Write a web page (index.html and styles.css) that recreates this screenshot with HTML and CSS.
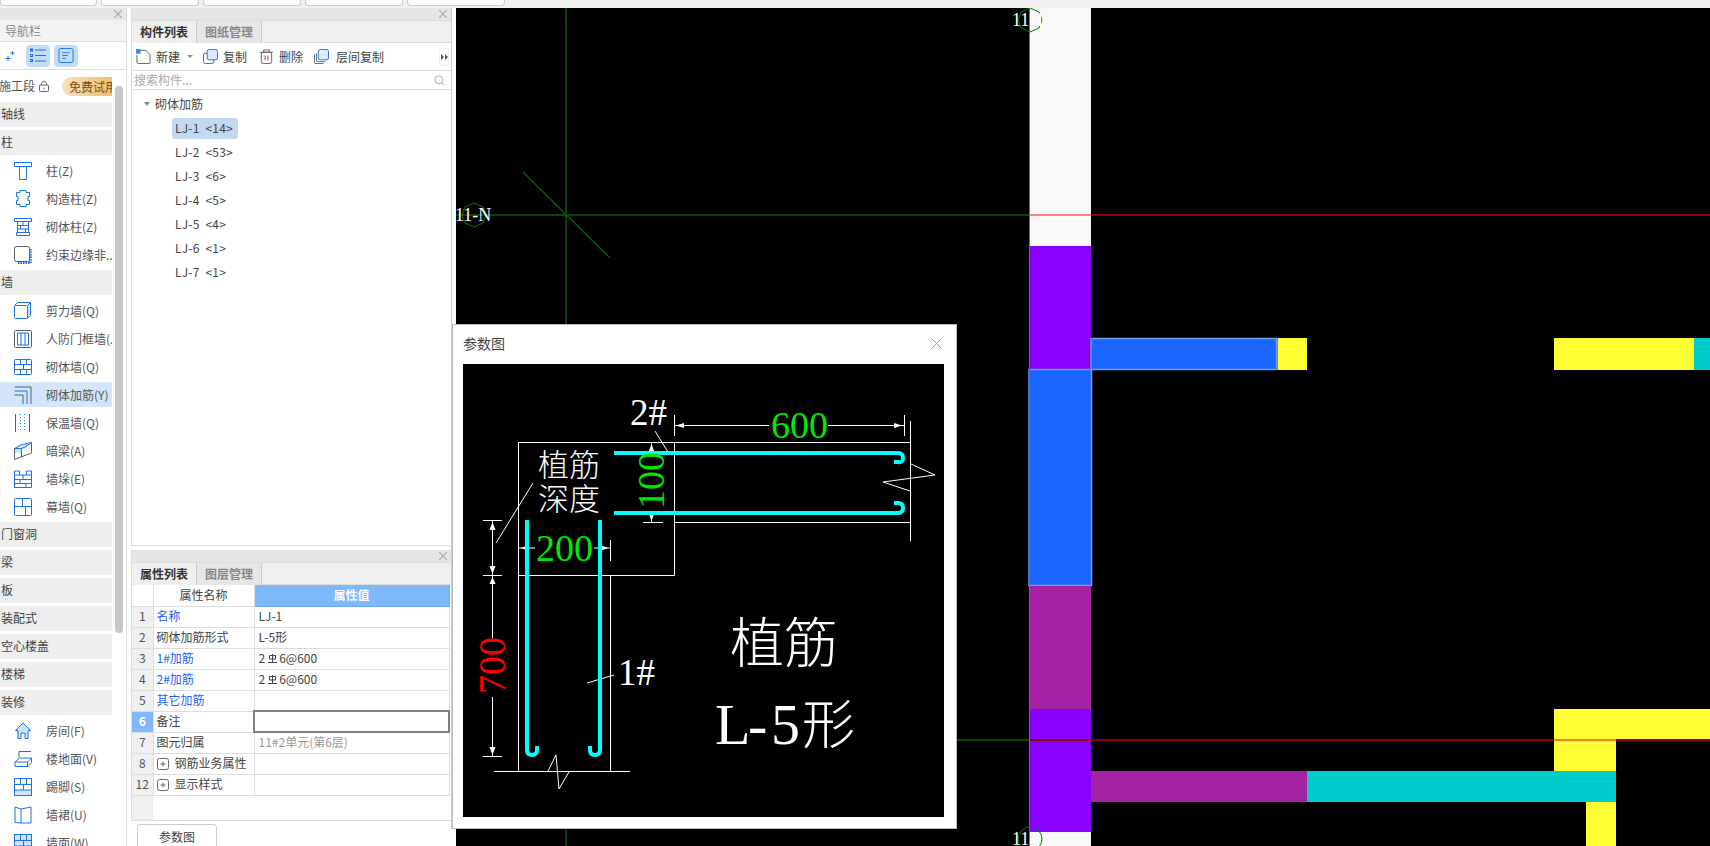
FILE: index.html
```html
<!DOCTYPE html>
<html lang="zh">
<head>
<meta charset="utf-8">
<title>参数图</title>
<link rel="stylesheet" href="styles.css">
</head>
<body>
<div class="app">
  <div class="topstrip">
    <div class="toptab first"></div><div class="toptab"></div><div class="toptab"></div><div class="toptab"></div><div class="toptab"></div>
  </div>
  <div class="main">
    <aside class="nav">
      <div class="panelbar"><svg class="x" viewBox="0 0 8 8"><path d="M0 0L8 8M8 0L0 8"/></svg></div>
      <div class="navtitle">导航栏</div>
      <div class="navtools">
        <svg class="spark" viewBox="0 0 10 12"><path d="M3 6V11M.5 8.500H5.500M7.500 1V5M5.500 3H9.500"/></svg>
        <span class="toggle"><svg viewBox="0 0 16 14"><path class="bl" d="M5 1.500H16M5 7H16M5 12.500H16"/><rect class="bl" x=".5" y=".5" width="2" height="2"/><rect class="bl" x=".5" y="6" width="2" height="2"/><rect class="bl" x=".5" y="11" width="2" height="2"/></svg></span>
        <span class="toggle"><svg viewBox="0 0 16 16"><rect class="bl" x=".5" y=".5" width="15" height="15" rx="2"/><path class="bl" d="M4 5H12M4 8H10M4 11H8"/></svg></span>
      </div>
      <div class="navlist">
        <div class="stage"><span class="stagename">施工段</span>
          <svg class="lock" viewBox="0 0 10 11"><rect class="gr" x=".5" y="4" width="9" height="6.500" rx="1"/><path class="gr" d="M2.500 4V2.500a2.500 2 0 0 1 5 0V4M5 6.500V8.500"/></svg>
          <span class="pill">免费试用</span></div>
        <div class="group">轴线</div>
        <div class="group">柱</div>
        <div class="item"><svg class="ic" viewBox="0 0 18 18"><path class="bl" d="M.5.5H17.500V4.500H.5ZM5.500 4.500V17.500H12.500V4.500"/></svg>柱(Z)</div>
        <div class="item"><svg class="ic" viewBox="0 0 18 18"><path class="bl" d="M6 .5H12V2.500H15.500V6.500H14V10.500H15.500V14.500H12V16.500H6V14.500H2.500V10.500H4V6.500H2.500V2.500H6Z"/></svg>构造柱(Z)</div>
        <div class="item"><svg class="ic" viewBox="0 0 18 18"><path class="bl" d="M.5.5H17.500V3.500H.5ZM3.500 3.500V14.500M14.500 3.500V14.500M2.500 14.500H15.500V17.500H2.500ZM3.500 7.500H14.500M3.500 11H14.500M9 3.500V7.500M6.500 7.500V11M11.500 11V14.500"/></svg>砌体柱(Z)</div>
        <div class="item"><svg class="ic" viewBox="0 0 18 18"><rect class="dk" x=".5" y=".5" width="15" height="15" rx="2"/><path class="hatch" d="M16.500 3V17H3"/></svg>约束边缘非...</div>
        <div class="group">墙</div>
        <div class="item"><svg class="ic" viewBox="0 0 18 18"><path class="fl" d="M13.500 3.500L16.500.5V13.500L13.500 16.500Z"/><rect class="bl" x=".5" y="3.500" width="13" height="13" rx="1"/><path class="bl" d="M.5 3.500L3.500.5H16.500V13.500L13.500 16.500M13.500 3.500L16.500.5"/></svg>剪力墙(Q)</div>
        <div class="item"><svg class="ic" viewBox="0 0 18 18"><rect class="dk" x=".5" y=".5" width="17" height="17" rx="1"/><path class="bl" d="M3.500 3V15M7 3V15M11 3V15M14.500 3V15M3.500 3H14.500M3.500 15H14.500"/></svg>人防门框墙(...</div>
        <div class="item"><svg class="ic" viewBox="0 0 18 18"><rect class="bl" x=".5" y="1.500" width="17" height="15" rx="1"/><path class="bl" d="M.5 6.500H17.500M.5 11.500H17.500M6.500 1.500V6.500M12.500 1.500V6.500M9.500 6.500V11.500M6.500 11.500V16.500M12.500 11.500V16.500"/></svg>砌体墙(Q)</div>
        <div class="item on"><svg class="ic" viewBox="0 0 18 18"><path class="dk" d="M.5 1H17V18M.5 9H9V18"/><path class="bl" d="M.5 5H13V18"/></svg>砌体加筋(Y)</div>
        <div class="item"><svg class="ic" viewBox="0 0 18 18"><path class="dk" d="M1.500 0V18M15.500 0V18"/><path class="dots" d="M6.500 0V18M10.500 0V18"/></svg>保温墙(Q)</div>
        <div class="item"><svg class="ic" viewBox="0 0 18 18"><path class="fl" d="M.5 6.500L6.500 3L17.500.5L11 6.500H.5V11H7V6.500Z"/><path class="bl" d="M.5 6.500L6.500 3L17.500.5L11 5L7.500 6.500H.5"/><path class="dk" d="M.5 6.500V17.500L17.500 11V.5M7.500 6.500V15"/></svg>暗梁(A)</div>
        <div class="item"><svg class="ic" viewBox="0 0 18 18"><path class="bl" d="M.5 1V17.500H17.500V1H12.500V5H5.500V1ZM.5 5H5.500M.5 9.500H17.500M12.500 5H17.500M9 5V9.500M6 9.500V13.500M.5 13.500H17.500M12 13.500V17.500"/></svg>墙垛(E)</div>
        <div class="item"><svg class="ic" viewBox="0 0 18 18"><rect class="bl" x=".5" y=".5" width="17" height="17" rx="1"/><path class="bl" d="M.5 8.500H17.500M8.500.5V8.500M11.500 8.500V17.500"/></svg>幕墙(Q)</div>
        <div class="group">门窗洞</div>
        <div class="group">梁</div>
        <div class="group">板</div>
        <div class="group">装配式</div>
        <div class="group">空心楼盖</div>
        <div class="group">楼梯</div>
        <div class="group">装修</div>
        <div class="item"><svg class="ic" viewBox="0 0 18 18"><path class="fl" d="M9 1L1.500 8.500H4V16.500H7V11H11V16.500H14V8.500H16.500Z"/><path class="bl" d="M9 1L1.500 8.500H4V16.500H7V11H11V16.500H14V8.500H16.500Z"/></svg>房间(F)</div>
        <div class="item"><svg class="ic" viewBox="0 0 18 18"><path class="dk" d="M5 7V1.500H17"/><path class="bl" d="M1 12L5.500 8H17.500V12.500L14 16.500H1ZM1 12H13.500V16.500M13.500 12L17.500 8"/></svg>楼地面(V)</div>
        <div class="item"><svg class="ic" viewBox="0 0 18 18"><rect class="fl" x="1" y="12" width="16" height="5"/><rect class="bl" x=".5" y=".5" width="17" height="17"/><path class="bl" d="M.5 6.500H17.500M.5 12H17.500M6.500.5V6.500M12.500.5V6.500M9.500 6.500V12"/></svg>踢脚(S)</div>
        <div class="item"><svg class="ic" viewBox="0 0 18 18"><path class="bl" d="M1 1L7 3V17L1 16.500ZM7 3L17 1V17L7 17"/></svg>墙裙(U)</div>
        <div class="item"><svg class="ic" viewBox="0 0 18 18"><rect class="fl" x="1" y="1" width="16" height="16"/><rect class="bl" x=".5" y=".5" width="17" height="17"/><path class="bl" d="M.5 6.500H17.500M.5 12H17.500M6.500.5V6.500M12.500.5V6.500M9.500 6.500V12"/></svg>墙面(W)</div>
      </div>
      <div class="scrollthumb"></div>
    </aside>

    <section class="side">
      <div class="sidepanels">
        <div class="panel listpanel">
          <div class="panelbar"><svg class="x" viewBox="0 0 8 8"><path d="M0 0L8 8M8 0L0 8"/></svg></div>
          <div class="tabs"><span class="tab active">构件列表</span><span class="tab">图纸管理</span></div>
          <div class="toolbar">
            <span class="tool new"><svg class="tic" viewBox="0 0 16 16"><path class="dk" d="M5 1.500H10.500L15 6V14a1.500 1.500 0 0 1-1.500 1.500H2.500A1.500 1.500 0 0 1 1 14V6"/><rect class="dotsq" x="0" y="0" width="5" height="5"/></svg>新建</span>
            <span class="caret"></span>
            <span class="tool copy"><svg class="tic" viewBox="0 0 16 16"><rect class="dk" x=".5" y="4.500" width="11" height="11" rx="2"/><rect class="flb" x="4.500" y=".5" width="11" height="11" rx="2"/></svg>复制</span>
            <span class="tool del"><svg class="tic" viewBox="0 0 16 16"><path class="dk" d="M1 3.500H15M5 3.500V1H11V3.500"/><rect class="dk" x="2.500" y="3.500" width="11" height="12" rx="2"/><path class="rd" d="M6.500 7V12M9.500 7V12"/></svg>删除</span>
            <span class="tool floor"><svg class="tic" viewBox="0 0 16 16"><path class="dk" d="M.5 6V14a1.500 1.500 0 0 0 1.500 1.500H10M2.500 4.500V12a1.500 1.500 0 0 0 1.500 1.500H12"/><rect class="flb" x="4.500" y=".5" width="11" height="11" rx="2"/></svg>层间复制</span>
            <span class="more"><svg viewBox="0 0 7 6"><path d="M0 0L3 3L0 6ZM4 0L7 3L4 6Z"/></svg></span>
          </div>
          <div class="search"><span>搜索构件...</span><svg class="mag" viewBox="0 0 11 11"><circle cx="4.800" cy="4.800" r="4"/><path d="M8 8L10.500 10.500"/></svg></div>
          <div class="tree">
            <div class="treehead"><span class="tri"></span>砌体加筋</div>
            <div class="treerow"><span class="sel">LJ-1 &lt;14&gt;</span></div>
            <div class="treerow"><span>LJ-2 &lt;53&gt;</span></div>
            <div class="treerow"><span>LJ-3 &lt;6&gt;</span></div>
            <div class="treerow"><span>LJ-4 &lt;5&gt;</span></div>
            <div class="treerow"><span>LJ-5 &lt;4&gt;</span></div>
            <div class="treerow"><span>LJ-6 &lt;1&gt;</span></div>
            <div class="treerow"><span>LJ-7 &lt;1&gt;</span></div>
          </div>
        </div>
        <div class="panel proppanel">
          <div class="panelbar"><svg class="x" viewBox="0 0 8 8"><path d="M0 0L8 8M8 0L0 8"/></svg></div>
          <div class="tabs"><span class="tab active">属性列表</span><span class="tab">图层管理</span></div>
          <table class="props">
            <colgroup><col class="c1"><col class="c2"><col class="c3"></colgroup>
            <tr class="hdr"><td></td><td class="ctr">属性名称</td><td class="hv">属性值</td></tr>
            <tr><td class="idx">1</td><td class="lnk">名称</td><td class="val">LJ-1</td></tr>
            <tr><td class="idx">2</td><td class="nm">砌体加筋形式</td><td class="val">L-5形</td></tr>
            <tr><td class="idx">3</td><td class="lnk">1#加筋</td><td class="val">2<svg class="rebar" viewBox="0 0 9 9"><path d="M1.500 1.500H7.500V5H1.500ZM4.500 0V8M0 8.500H9"/></svg>6@600</td></tr>
            <tr><td class="idx">4</td><td class="lnk">2#加筋</td><td class="val">2<svg class="rebar" viewBox="0 0 9 9"><path d="M1.500 1.500H7.500V5H1.500ZM4.500 0V8M0 8.500H9"/></svg>6@600</td></tr>
            <tr><td class="idx">5</td><td class="lnk">其它加筋</td><td class="val"></td></tr>
            <tr><td class="idx cur">6</td><td class="nm">备注</td><td class="val edit"></td></tr>
            <tr><td class="idx">7</td><td class="nm">图元归属</td><td class="val mute">11#2单元(第6层)</td></tr>
            <tr><td class="idx">8</td><td class="nm"><svg class="plus" viewBox="0 0 12 12"><rect x=".5" y=".5" width="11" height="11" rx="2"/><path d="M3.500 6H8.500M6 3.500V8.500"/></svg>钢筋业务属性</td><td class="val"></td></tr>
            <tr><td class="idx">12</td><td class="nm"><svg class="plus" viewBox="0 0 12 12"><rect x=".5" y=".5" width="11" height="11" rx="2"/><path d="M3.500 6H8.500M6 3.500V8.500"/></svg>显示样式</td><td class="val"></td></tr>
          </table>
          <div class="tablerest"><div class="restidx"></div></div>
        </div>
      </div>
      <div class="bottomtabs"><span class="btab">参数图</span></div>
    </section>

    <main class="canvas">
      <svg class="cad" viewBox="456 8 1254 838">
        <path class="gl" d="M566 8V846M456 215H1030M523 172L610 258"/>
        <rect class="wh" x="1030" y="8" width="61" height="238"/>
        <rect class="vi" x="1030" y="246" width="61" height="124"/>
        <rect class="bm" x="1029" y="369.500" width="62.500" height="216"/>
        <rect class="mg" x="1030" y="586" width="61" height="123"/>
        <rect class="vi" x="1030" y="709" width="61" height="123"/>
        <rect class="wh" x="1030" y="832" width="61" height="14"/>
        <rect class="bm" x="1091" y="338.500" width="185.500" height="31"/>
        <rect class="yl" x="1277.500" y="338" width="29.500" height="32"/>
        <rect class="yl" x="1554" y="338" width="140" height="32"/>
        <rect class="cy" x="1694" y="338" width="16" height="32"/>
        <rect class="yl" x="1554" y="709" width="156" height="31"/>
        <rect class="yl" x="1554" y="740" width="62" height="31"/>
        <rect class="mg" x="1091" y="771" width="216" height="31"/>
        <rect class="cy" x="1307" y="771" width="309" height="31"/>
        <rect class="yl" x="1586" y="802" width="30" height="44"/>
        <path class="dr" d="M1091 215H1710M1030 740H1710"/>
        <path class="pk" d="M1030 215H1091"/>
        <path class="or" d="M1554 740H1616"/>
        <path class="gl" d="M956 740H1030"/>
        <path class="rv" d="M1029.500 8V846"/>
        <polygon class="hex" points="1030,8 1039,12 1042,20 1039,28 1030,32 1021,28 1018,20 1021,12"/>
        <polygon class="hex" points="474,203 483,207 486,215 483,223 474,227 465,223 462,215 465,207"/>
        <circle class="hex" cx="1030" cy="839" r="12"/>
        <text class="lbl" x="455" y="221">11-N</text>
        <text class="lbl" x="1012" y="26">11-1</text>
        <text class="lbl" x="1012" y="845">11</text>
      </svg>
    </main>
  </div>

  <div class="dialog">
    <div class="dlgtitle"><span>参数图</span><svg class="dlgx" viewBox="0 0 11 11"><path d="M.5.5L10.500 10.500M10.500.5L.5 10.500"/></svg></div>
    <svg class="figure" viewBox="463 364 481 453">
      <path class="wl" d="M518.500 442.500H910.500M518.500 442.500V771.500M518.500 575.500H674.500V442.500M674.500 522.500H910.500M910.500 421V541M610.500 575.500V771.500M494 771.500H630M904.500 415V436M674.500 415V436M674.500 425.500H769M828 425.500H904.500M610.500 540V561M519 548H535M594 548H610.500M651.500 443V452M651.500 513V522.500M643 522.500H663M492.500 520V638M492.500 697V756.500M483 520.500H502M483 575.500H502M483 756.500H502"/>
      <path class="wt" d="M548 771L556 755L559 789L569 772M911 464L935 475L883 482L910 491M655 431L668 452M533 483L496 543M587 683L614 675"/>
      <path class="arw" d="M676 425.500L684 423V428ZM902 425.500L894 423V428ZM521 548L529 545V551ZM608 548L600 545V551ZM651.500 444L648.500 452H654.500ZM651.500 521L648.500 513H654.500ZM492.500 522L489.500 530H495.500ZM492.500 574L489.500 566H495.500ZM492.500 577L489.500 584H495.500ZM492.500 755L489.500 747H495.500Z"/>
      <path class="rb" d="M614 453H898Q903 453 903 458T898 462H894M614 513H898Q903 513 903 508T898 503H894M527 520V750Q527 755 532 755T537 750V746M600 520V750Q600 755 595 755T590 750V746"/>
      <text class="dim gn" x="771" y="438">600</text>
      <text class="dim gn" x="536" y="561">200</text>
      <text class="dim gn" transform="translate(664 509) rotate(-90)" x="0" y="0">100</text>
      <text class="dim rd2" transform="translate(505 694) rotate(-90)" x="0" y="0">700</text>
      <text class="tag" x="630" y="425">2#</text>
      <text class="tag" x="618" y="685">1#</text>
      <text class="cn" x="538" y="476">植筋</text>
      <text class="cn" x="538" y="510">深度</text>
      <text class="big" x="730" y="663">植筋</text>
      <text class="form"><tspan x="715" y="744">L</tspan><tspan x="748">-</tspan><tspan x="771">5</tspan><tspan class="formcn" x="802">形</tspan></text>
    </svg>
  </div>
</div>
</body>
</html>
```
FILE: styles.css
```css
* { box-sizing: border-box; }
html, body { margin: 0; padding: 0; }
body {
  background: #fff;
  font-family: "Noto Sans CJK SC", "Noto Sans", sans-serif;
  font-size: 12px;
  line-height: 16px;
  color: #444;
  overflow: hidden;
}
.app { position: relative; width: 1710px; height: 846px; overflow: hidden; display: flex; flex-direction: column; }

.topstrip { height: 8px; flex: none; background: #f0f0f0; display: flex; gap: 4px; align-items: flex-start; }
.toptab { width: 98px; height: 6px; background: #fff; border: 1px solid #ccc; border-top: 0; border-radius: 0 0 4px 4px; }
.toptab.first { width: 97px; }

.main { flex: 1; display: flex; min-height: 0; position: relative; }

/* shared panel bits */
.panelbar { height: 12px; flex: none; background: #e6e6e6; display: flex; justify-content: flex-end; align-items: center; padding-right: 4px; }
.x { width: 8px; height: 8px; fill: none; stroke: #aaa; stroke-width: 1.2; }

/* navigation */
.nav { width: 127px; flex: none; border-right: 1px solid #ddd; display: flex; flex-direction: column; overflow: hidden; }
.navtitle { height: 22px; flex: none; background: #f2f2f2; border-bottom: 1px solid #ddd; padding-left: 5px; line-height: 21px; color: #888; }
.navtools { height: 28px; flex: none; border-bottom: 1px solid #ddd; display: flex; align-items: center; padding-left: 5px; }
.spark { width: 10px; height: 12px; fill: none; stroke: #1a73e8; stroke-width: 1; margin-right: 11px; }
.toggle { width: 24px; height: 22px; border-radius: 4px; background: #c3dcf5; display: flex; align-items: center; justify-content: center; margin-right: 4px; }
.toggle svg { width: 16px; height: 15px; }
.navlist { width: 112px; overflow: hidden; flex: 1; display: flex; flex-direction: column; }
.stage { height: 32px; flex: none; display: flex; align-items: center; white-space: nowrap; }
.stagename { margin-left: -1px; width: 36px; flex: none; color: #555; }
.lock { width: 10px; height: 11px; margin-left: 4px; flex: none; }
.pill { margin-left: 13px; height: 19px; line-height: 19px; padding-left: 7px; width: 60px; flex: none; border-radius: 10px 0 0 10px; background: linear-gradient(90deg, #f7e2bd, #efb75f); color: #7c4d12; }
.group { height: 25px; flex: none; background: #eee; line-height: 24px; padding-left: 1px; margin-bottom: 3px; color: #444; }
.group + .item { margin-top: -1px; }
.item + .group { margin-top: 1px; }
.item { height: 28px; flex: none; display: flex; align-items: center; gap: 14px; padding-left: 14px; white-space: nowrap; color: #555; }
.item.on { background: #d2e5fb; height: 25px; margin: 1px 0 2px; }
.ic { width: 18px; height: 18px; flex: none; }
.scrollthumb { position: absolute; left: 115px; top: 78px; width: 8px; height: 547px; border-radius: 4px; background: #c8c8c8; }

.bl { fill: none; stroke: #1a73e8; stroke-width: 1; }
.dk { fill: none; stroke: #55606c; stroke-width: 1; }
.gr { fill: none; stroke: #666; stroke-width: 1; }
.fl { fill: #cfe3fb; stroke: none; }
.flb { fill: #dbeafc; stroke: #1a73e8; stroke-width: 1; }
.rd { fill: none; stroke: #e0281e; stroke-width: 1; }
.hatch { fill: none; stroke: #1a73e8; stroke-width: 2.5; stroke-dasharray: 1.5 1; }
.dots { fill: none; stroke: #1a73e8; stroke-width: 1; stroke-dasharray: 1 2; }
.dotsq { fill: #3a8ee6; }

/* side panels */
.side { width: 321px; flex: none; margin-left: 4px; display: flex; flex-direction: column; }
.sidepanels { height: 813px; flex: none; border-right: 1px solid #ccc; display: flex; flex-direction: column; gap: 4px; }
.panel { border-left: 1px solid #ddd; border-bottom: 1px solid #ddd; display: flex; flex-direction: column; }
.listpanel { height: 538px; flex: none; }
.proppanel { flex: 1; }
.tabs { height: 23px; flex: none; background: #f0f0f0; border-bottom: 1px solid #ddd; border-top: 1px solid #ddd; display: flex; }
.tab { width: 65px; height: 22px; line-height: 21px; text-align: center; background: #e6e6e6; color: #888; border-right: 1px solid #ccc; font-weight: 700; }
.tab.active { background: #f0f0f0; color: #333; }
.toolbar { height: 28px; flex: none; border-bottom: 1px solid #ddd; display: flex; align-items: center; padding-left: 4px; }
.tool { display: flex; align-items: center; gap: 5px; white-space: nowrap; color: #444; }
.tic { width: 15px; height: 15px; flex: none; }
.caret { width: 0; height: 0; border: 3px solid transparent; border-top: 3px solid #999; border-bottom: 0; margin-left: 7px; }
.copy { margin-left: 10px; }
.del { margin-left: 12px; }
.floor { margin-left: 11px; gap: 7px; }
.more { margin-left: auto; margin-right: 2px; width: 10px; height: 18px; border: 1px solid #eee; border-radius: 3px; display: flex; align-items: center; justify-content: center; }
.more svg { width: 7px; height: 6px; fill: #555; }
.search { height: 19px; flex: none; border-bottom: 1px solid #ddd; display: flex; align-items: center; justify-content: space-between; padding: 0 6px 0 2px; color: #aaa; }
.mag { width: 11px; height: 11px; fill: none; stroke: #aaa; stroke-width: 1; }
.tree { flex: 1; }
.treehead { height: 26px; display: flex; align-items: center; padding: 2px 0 0 12px; color: #444; }
.tri { width: 0; height: 0; border: 3px solid transparent; border-top: 4px solid #888; border-bottom: 0; margin-right: 5px; }
.treerow { height: 24px; padding-left: 39px; display: flex; align-items: center; }
.treerow span { height: 21px; line-height: 20px; padding: 0 4px 0 4px; border-radius: 3px; word-spacing: 3px; letter-spacing: .2px; white-space: nowrap; }
.treerow .sel { background: #c3d9f1; width: 66px; margin-left: 1px; padding-left: 3px; }

.props { width: 317px; border-collapse: collapse; table-layout: fixed; flex: none; }
.c1 { width: 21px; }
.c2 { width: 101px; }
.c3 { width: 195px; }
.props td { height: 21px; padding: 0 3px 2px; border: 1px solid #ddd; white-space: nowrap; overflow: hidden; line-height: 17px; }
.props tr:first-child td { border-top: 0; }
.props tr td:first-child { border-left: 0; }
.ctr { text-align: center; }
.props .hv { background: #7fb8fb; color: #fff; text-align: center; border-color: #6aa9f0; font-weight: 700; }
.props .idx { background: #f0f0f0; text-align: center; padding: 0 0 2px; color: #555; }
.props .cur { background: #7fb8fb; color: #fff; font-weight: 700; }
.lnk { color: #1f5fff; }
.nm { color: #444; }
.props .val { padding-left: 4px; }
.props .edit { border: 2px solid #808080; }
.mute { color: #999; }
.rebar { width: 9px; height: 9px; margin: 0 2px 3px 3px; vertical-align: middle; fill: none; stroke: #444; stroke-width: 1; }
.plus { width: 12px; height: 12px; margin-right: 6px; vertical-align: -2px; fill: none; stroke: #666; stroke-width: 1; }
.tablerest { flex: 1; }
.restidx { width: 21px; height: 100%; background: #f0f0f0; }
.bottomtabs { flex: 1; padding: 3px 0 0 6px; position: relative; }
.bottomtabs::after { content: ""; position: absolute; right: 0; top: 0; width: 1px; height: 8px; background: #ccc; }
.btab { display: block; width: 80px; height: 24px; border: 1px solid #ccc; border-bottom: 0; border-radius: 4px 4px 0 0; text-align: center; line-height: 24px; color: #444; background: #fff; }

/* drawing canvas */
.canvas { flex: 1; margin-left: 4px; background: #000; min-width: 0; }
.cad { display: block; width: 100%; height: 100%; }
.gl { fill: none; stroke: #0a5a0a; stroke-width: 1.5; }
.dr { fill: none; stroke: #8a0000; stroke-width: 2; }
.pk { fill: none; stroke: #ff8080; stroke-width: 2; }
.or { fill: none; stroke: #ff8020; stroke-width: 2; }
.rv { fill: none; stroke: #ff3030; stroke-width: 1; }
.wh { fill: #f8f8f8; }
.vi { fill: #8800ff; }
.bm { fill: #1a66ff; stroke: #6f9cf0; stroke-width: 1.500; }
.mg { fill: #a323a3; }
.yl { fill: #ffff33; }
.cy { fill: #00cccc; }
.hex { fill: none; stroke: #0a7a0a; stroke-width: 1; }
.lbl { font-family: "Liberation Serif", serif; font-size: 18px; fill: #fff; }

/* dialog */
.dialog { position: absolute; left: 452px; top: 324px; width: 505px; height: 505px; background: #fff; border: 1px solid #bbb; display: flex; flex-direction: column; padding: 0 12px 11px 10px; }
.dlgtitle { height: 39px; flex: none; display: flex; align-items: center; justify-content: space-between; padding: 0 1px 3px 0; color: #444; font-size: 14px; }
.dlgx { width: 11px; height: 11px; fill: none; stroke: #999; stroke-width: 1; margin-right: 1px; }
.figure { display: block; width: 481px; height: 453px; background: #000; flex: none; }
.wl { fill: none; stroke: #fff; stroke-width: 1; }
.wt { fill: none; stroke: #fff; stroke-width: 1; }
.arw { fill: #fff; }
.rb { fill: none; stroke: #00ffff; stroke-width: 4; }
.dim { font-family: "Liberation Serif", serif; font-size: 38px; }
.gn { fill: #00e800; }
.rd2 { fill: #ff0000; }
.tag { font-family: "Liberation Serif", serif; font-size: 37px; fill: #fff; }
.cn { font-family: "Noto Sans CJK SC", sans-serif; font-size: 31px; font-weight: 300; fill: #fff; }
.big { font-family: "Noto Sans CJK SC", sans-serif; font-size: 54px; font-weight: 300; fill: #fff; }
.form { font-family: "Liberation Serif", serif; font-size: 58px; fill: #fff; }
.formcn { font-family: "Noto Sans CJK SC", sans-serif; font-size: 53px; font-weight: 300; }
```
